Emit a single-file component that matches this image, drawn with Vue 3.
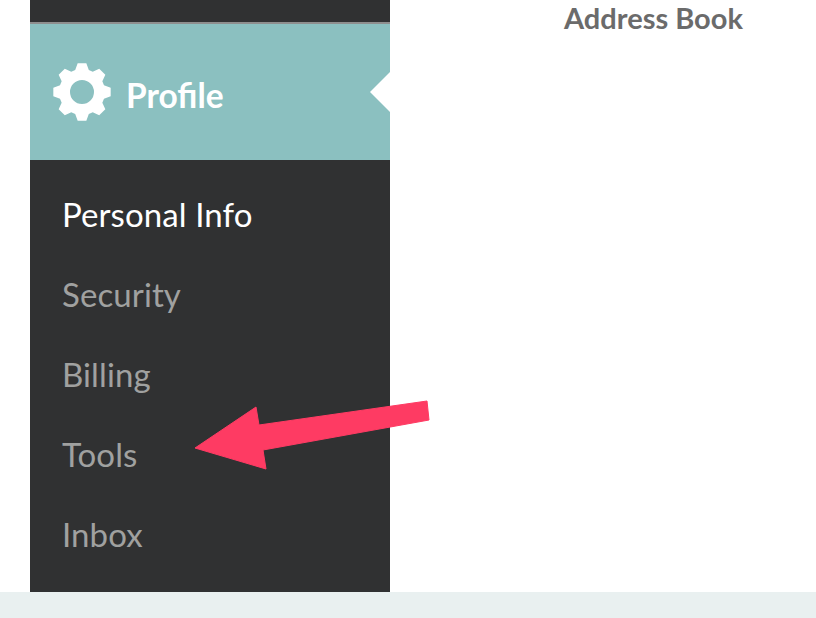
<template>
  <div class="page">
    <div class="content">
      <aside class="sidebar">
        <div class="top-bar"></div>
        <div class="profile-head">
          <svg class="gear" viewBox="-30 -30 60 60" width="60" height="60">
            <path :d="gearPath" fill="#fff" fill-rule="evenodd" />
          </svg>
          <span class="profile-title">Profile</span>
          <span class="notch"></span>
        </div>
        <nav class="menu">
          <a
            v-for="item in menu"
            :key="item"
            class="menu-item"
            :class="{ active: item === 'Personal Info' }"
          >{{ item }}</a>
        </nav>
      </aside>
      <main class="main">
        <h2 class="tab-title">Address Book</h2>
      </main>
    </div>
    <footer class="footer"></footer>

    <!-- seta de anotação por cima do menu -->
    <svg class="arrow" width="816" height="618" viewBox="0 0 816 618">
      <polygon
        points="427,401 429,420 263,450 266,469 195,448 256,407 259,425"
        fill="#fe3b63"
        stroke="#fe3b63"
        stroke-width="1"
        stroke-linejoin="round"
      />
    </svg>
  </div>
</template>

<script setup>
const menu = ['Personal Info', 'Security', 'Billing', 'Tools', 'Inbox']

// Engrenagem de 8 dentes com furo central
const buildGear = () => {
  const teeth = 8
  const outer = 29
  const root = 23
  const hole = 12
  const pts = []
  for (let i = 0; i < teeth; i++) {
    const a = (i * 2 * Math.PI) / teeth - Math.PI / 2
    const offs = [[-0.3, root], [-0.15, outer], [0.15, outer], [0.3, root]]
    for (const [d, r] of offs) {
      pts.push(`${(Math.cos(a + d) * r).toFixed(2)} ${(Math.sin(a + d) * r).toFixed(2)}`)
    }
  }
  return `M${pts.join('L')}Z M${hole} 0A${hole} ${hole} 0 1 0 ${-hole} 0A${hole} ${hole} 0 1 0 ${hole} 0Z`
}
const gearPath = buildGear()
</script>

<style>
html, body {
  margin: 0;
  background: #fff;
}
</style>

<style scoped>
.page {
  position: relative;
  width: 816px;
  height: 618px;
  overflow: hidden;
  font-family: Lato, "Open Sans", sans-serif;
}

.content {
  display: flex;
  height: 592px;
  padding-left: 30px;
}

.sidebar {
  width: 360px;
  background: #303132;
  display: flex;
  flex-direction: column;
}

.top-bar {
  height: 22px;
  border-bottom: 2px solid #8e8e8e;
}

.profile-head {
  position: relative;
  height: 136px;
  background: #8bc0c0;
  display: flex;
  align-items: center;
  gap: 14px;
  padding-left: 22px;
  box-sizing: border-box;
}

.gear {
  flex: none;
}

.profile-title {
  color: #fff;
  font-size: 33.5px;
  font-weight: 700;
  margin-top: 6px;
}

.notch {
  position: absolute;
  right: 0;
  top: 48px;
  border-top: 20px solid transparent;
  border-bottom: 20px solid transparent;
  border-right: 20px solid #fff;
}

.menu {
  display: flex;
  flex-direction: column;
  padding-top: 14px;
}

.menu-item {
  height: 80px;
  line-height: 80px;
  padding-left: 32px;
  font-size: 33px;
  font-weight: 400;
  letter-spacing: 0.1px;
  color: #a0a1a0;
}

.menu-item.active {
  color: #fff;
}

.main {
  flex: 1;
  padding-left: 174px;
}

.tab-title {
  margin: 0;
  color: #6b6b6b;
  font-size: 29px;
  font-weight: 700;
  line-height: 35px;
}

.footer {
  height: 26px;
  background: #e9f0f0;
}

.arrow {
  position: absolute;
  left: 0;
  top: 0;
  pointer-events: none;
}
</style>
